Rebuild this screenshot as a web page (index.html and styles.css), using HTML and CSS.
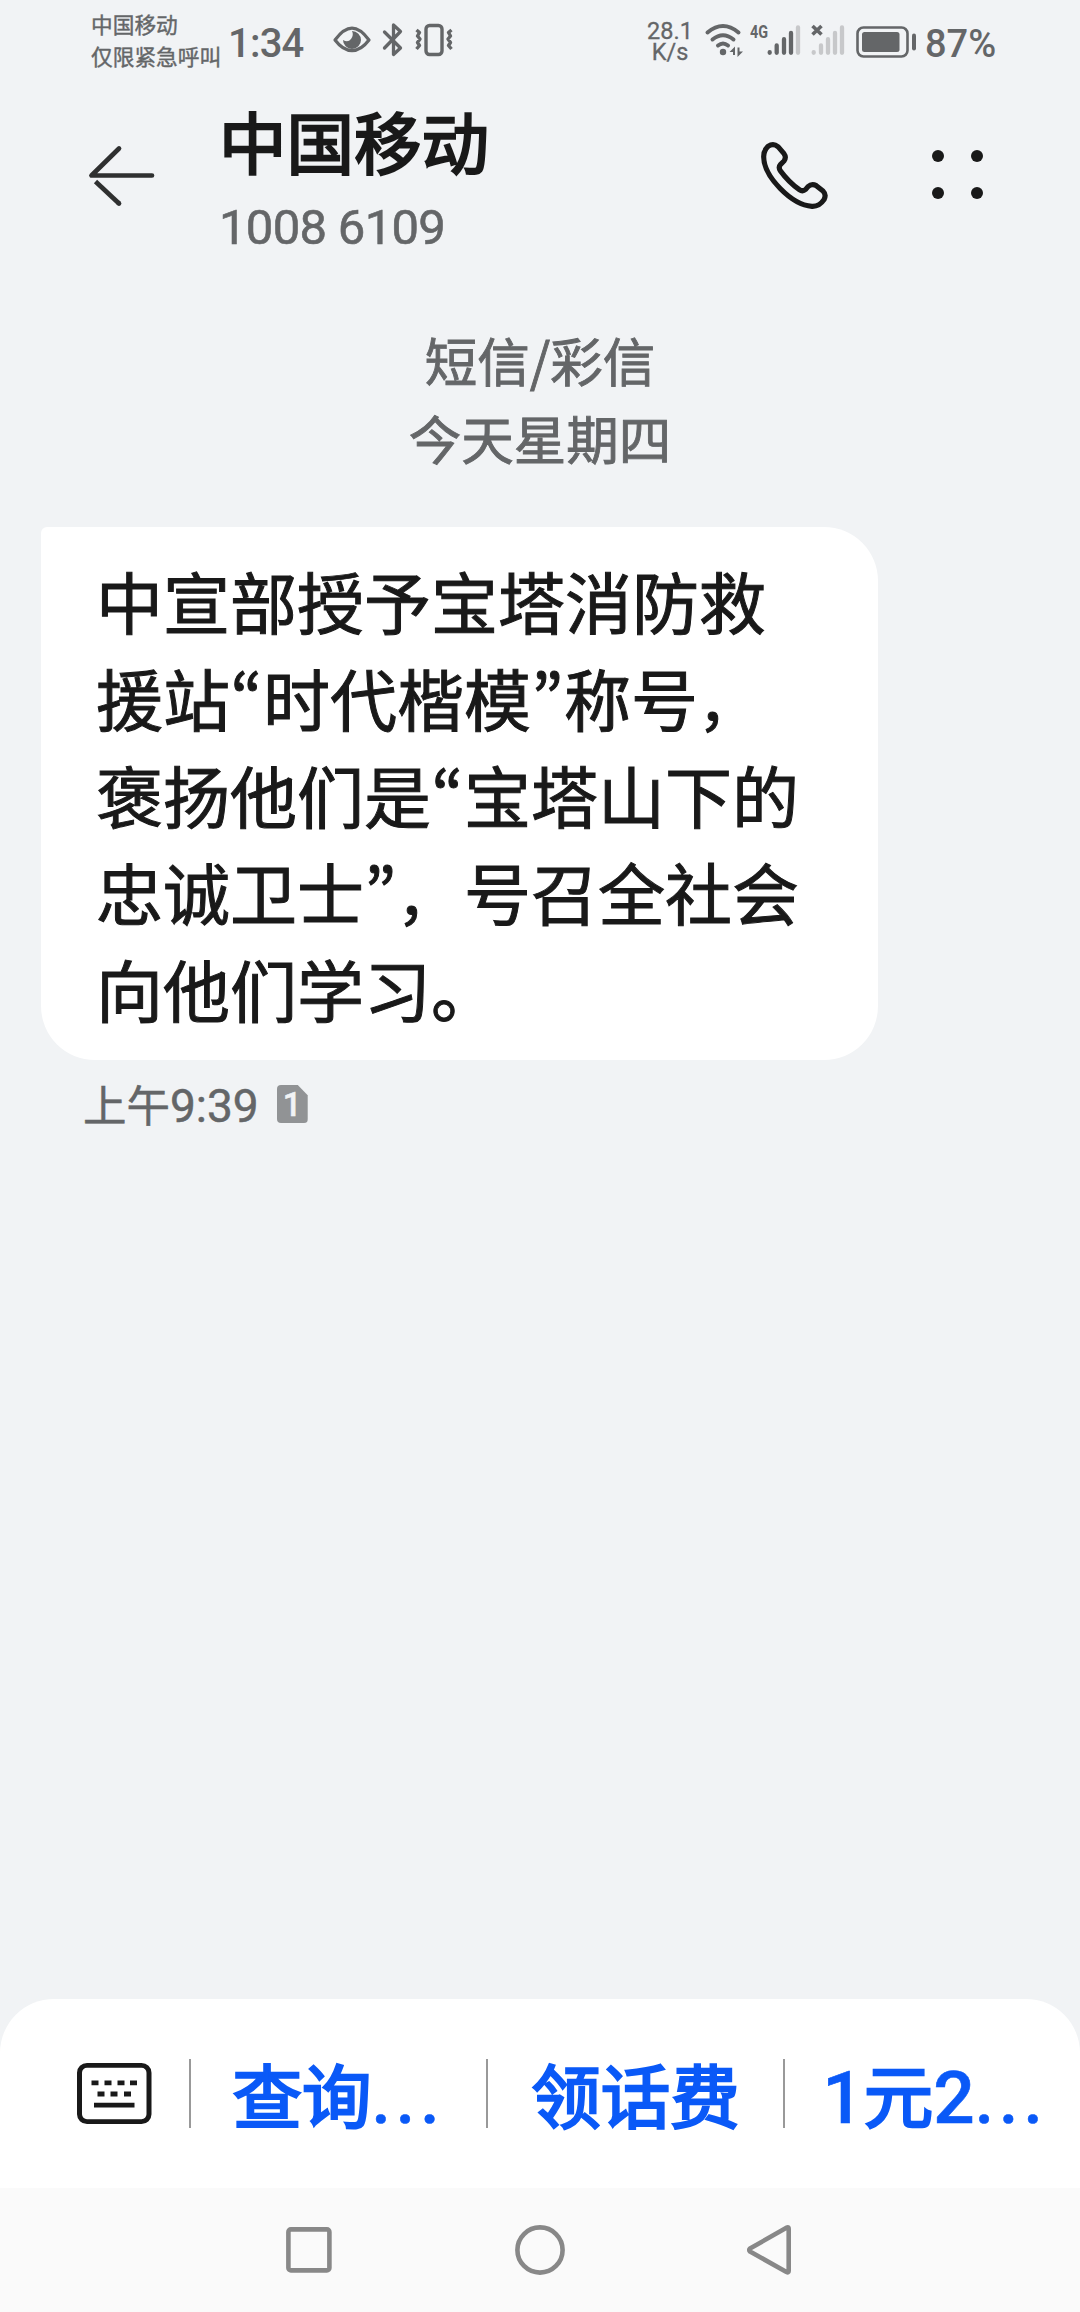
FILE: index.html
```html
<!DOCTYPE html>
<html lang="zh-CN">
<head>
<meta charset="utf-8">
<title>中国移动</title>
<link rel="stylesheet" href="styles.css">
</head>
<body>
<div class="screen">
  <div class="status">
    <div class="carriers"><span>中国移动</span><span>仅限紧急呼叫</span></div>
    <span class="clock">1:34</span>
    <svg class="ic-eye" width="38" height="28" viewBox="0 0 38 28"><path d="M2 14C8 6 13 2.200 19 2.200S30 6 36 14C30 22 25 24.600 19 24.600S8 22 2 14Z" fill="none" stroke="currentColor" stroke-width="3.200" stroke-linejoin="round"/><path d="M19 5a9 9 0 1 1-9 9q5 3 8-1t1-8Z" fill="currentColor"/></svg>
    <svg class="ic-bt" width="22" height="36" viewBox="0 0 22 36"><path d="M2.500 10 18.500 26 11.500 32.500V3L18.500 9.500 2.500 26" fill="none" stroke="currentColor" stroke-width="3.300" stroke-linecap="round" stroke-linejoin="round"/></svg>
    <svg class="ic-vib" width="40" height="34" viewBox="0 0 40 34"><rect x="12" y="2.500" width="16" height="29" rx="3.500" fill="none" stroke="currentColor" stroke-width="3.400"/><path d="M2.500 7 5.500 9.500 3.500 13 6 16 3.500 19.500 5.500 22.500 2.500 26M37.500 7 34.500 9.500 36.500 13 34 16 36.500 19.500 34.500 22.500 37.500 26" fill="none" stroke="currentColor" stroke-width="3.400" stroke-linejoin="round"/></svg>
    <div class="speed"><span>28.1</span><span>K/s</span></div>
    <svg class="ic-wifi" width="40" height="34" viewBox="0 0 40 34"><g fill="none" stroke="currentColor" stroke-width="4" stroke-linecap="round"><path d="M2.500 9.500Q18 -3.500 33.500 9.500"/><path d="M7.500 16.500Q18 8 28.500 16.500"/><path d="M13 22.500Q18 18.500 23 22.500" /></g><circle cx="18" cy="29" r="3.200" fill="currentColor"/><path d="M24.500 29 30 23.500V32H28V29ZM38 28.500 32.500 34V24.500H34.500V28.500Z" fill="currentColor"/></svg>
    <span class="net">4G</span>
    <svg class="ic-sig" width="36" height="32" viewBox="0 0 36 32"><g stroke="currentColor" stroke-width="4.300" stroke-linecap="round"><path d="M3.700 28.200V28.800M10.700 21.500V28.800M18 15.200V28.800M25 9V28.800"/><path class="faded" d="M32 3.500V28.800"/></g></svg>
    <svg class="ic-sig2" width="38" height="32" viewBox="0 0 38 32"><path class="faded" stroke-width="4.300" stroke-linecap="round" d="M4.700 28.200V28.800M12 21.500V28.800M19 15.200V28.800M26 9V28.800M33 3.500V28.800"/><path d="M3.500 2 12.500 10.500M12.500 2 3.500 10.500" stroke="currentColor" stroke-width="3.600"/></svg>
    <svg class="ic-bat" width="62" height="32" viewBox="0 0 62 32"><rect x="1.500" y="1.500" width="50" height="29" rx="6" fill="none" stroke="currentColor" stroke-width="2.600"/><rect x="6" y="6" width="37.500" height="20" rx="2.500" fill="currentColor"/><rect x="56" y="7.500" width="4" height="17" rx="2" fill="currentColor"/></svg>
    <span class="pct">87%</span>
  </div>

  <header class="header">
    <svg class="ic-back" width="70" height="62" viewBox="0 0 70 62"><g fill="none" stroke="#2f3030" stroke-width="4.700" stroke-linecap="round" stroke-linejoin="round"><path d="M32 3.500 4.500 30.500H65"/><path d="M8.500 36.500 32 58.500" stroke-linecap="butt"/><path d="M31.500 58 32 58.500"/></g></svg>
    <div class="who"><h1>中国移动</h1><p>1008 6109</p></div>
    <svg class="ic-phone" width="70" height="70" viewBox="120 93 210 210"><path d="M131 140Q131 122 144 109Q160 98 174 110L192 131Q200 142 192 153L182 163Q174 172 181 182Q205 215 238 239Q248 246 257 238L264 230Q275 220 289 227L309 243Q320 254 312 269Q298 290 276 289C215 285 131 200 131 140Z" fill="none" stroke="#191919" stroke-width="15.500" stroke-linejoin="round"/></svg>
    <svg class="ic-more" width="52" height="50" viewBox="0 0 52 50"><g fill="#191919"><circle cx="6" cy="6" r="6"/><circle cx="45" cy="6" r="6"/><circle cx="6" cy="43" r="6"/><circle cx="45" cy="43" r="6"/></g></svg>
  </header>

  <main class="thread">
    <div class="day"><div>短信/彩信</div><div>今天星期四</div></div>
    <div class="bubble">中宣部授予宝塔消防救<br>援站<span class="q">“</span>时代楷模<span class="q">”</span>称号<span class="comma">，</span><br>褒扬他们是<span class="q">“</span>宝塔山下的<br>忠诚卫士<span class="q">”</span><span class="comma">，</span>号召全社会<br>向他们学习。</div>
    <div class="meta"><span>上午<span class="num">9:39</span></span>
      <span class="sim">1</span>
    </div>
  </main>

  <footer class="menu">
    <div class="kb"><svg width="75" height="61" viewBox="0 0 75 63" preserveAspectRatio="none"><rect x="2.500" y="2.500" width="69.500" height="58" rx="7.500" fill="none" stroke="#191919" stroke-width="5"/><path d="M14.500 20.500h7M27.500 20.500h7M40.500 20.500h7M53 20.500h7M20.500 32h7M33.500 32h7M47 32h7" stroke="#191919" stroke-width="5"/><path d="M17 43.500h40.500" stroke="#191919" stroke-width="5"/></svg></div>
    <div class="item">查询<span class="dots">...</span></div>
    <div class="item">领话费</div>
    <div class="item"><span class="num">1</span>元<span class="num">2</span><span class="dots">...</span></div>
  </footer>
  <nav class="nav">
    <svg width="46" height="52" viewBox="0 0 46 52"><rect x="2.400" y="5.400" width="41" height="41" rx="2.500"/></svg>
    <svg width="52" height="52" viewBox="0 0 52 52"><circle cx="26" cy="26" r="22.600"/></svg>
    <svg width="46" height="52" viewBox="0 0 46 52"><path d="M39.500 3.400Q40.700 3.400 40.700 5V47Q40.700 49 38.500 48L2 27.500Q.4 26 2 24.500L38 4Z"/></svg>
  </nav>
</div>
</body>
</html>
```
FILE: styles.css
```css
* { box-sizing: border-box; margin: 0; padding: 0; }
body { background: #f1f3f5; font-family: "Noto Sans CJK SC", sans-serif; }
.screen { width: 1080px; height: 2312px; display: flex; flex-direction: column; overflow: hidden; }
svg { display: block; flex: none; overflow: visible; }

.status { height: 90px; display: flex; align-items: flex-start; color: #646668; padding-left: 91px; white-space: nowrap; }
.carriers { width: 137px; padding-top: 8px; font-size: 21.700px; line-height: 32px; display: flex; flex-direction: column; -webkit-text-stroke: .4px; }
.clock { width: 105px; margin-top: 20px; font: 500 40px/48px Roboto, sans-serif; letter-spacing: -.8px; }
.ic-eye { margin-top: 26px; }
.ic-bt { margin: 22px 0 0 11px; }
.ic-vib { margin: 23px 0 0 10px; }
.speed { width: 50px; margin: 21px 0 0 191px; font: 400 23.500px/21px Roboto, sans-serif; display: flex; flex-direction: column; align-items: center; -webkit-text-stroke: .3px; }
.ic-wifi { margin: 23px 0 0 10px; }
.net { width: 16px; margin: 22px 0 0 5px; font: 700 18px/20px Roboto, sans-serif; transform: scaleX(.8); transform-origin: left; }
.ic-sig { margin-top: 24px; }
.ic-sig2 { margin: 24px 0 0 7px; }
.ic-bat { margin: 26px 0 0 9px; }
.faded { stroke: #c7c8ca; }
.pct { margin: 21px 0 0 7px; font: 500 38px/46px Roboto, sans-serif; }

.header { height: 200px; display: flex; align-items: flex-start; padding-left: 87px; }
.ic-back { margin-top: 55px; }
.who { width: 540px; padding-left: 62px; }
.who h1 { font-size: 67.500px; line-height: 80px; font-weight: 400; -webkit-text-stroke: 2.300px; color: #191919; margin-top: 10px; }
.who p { font: 400 49px/58px Roboto, sans-serif; letter-spacing: -.7px; -webkit-text-stroke: .6px; color: #646668; margin-top: 19px; }
.ic-phone { margin: 51px 0 0 63px; }
.ic-more { margin: 60px 0 0 102px; }

.thread { flex: 1; padding: 30px 0 0 41px; }
.day { margin-left: -41px; text-align: center; font-size: 52.500px; line-height: 78px; color: #646668; -webkit-text-stroke: .9px; }
.bubble { width: 837px; height: 533px; margin-top: 51px; padding: 24px 0 0 55px; border-radius: 6px 54px 54px 54px; background: #fff; color: #191919; font-size: 67px; line-height: 97px; white-space: nowrap; -webkit-text-stroke: 1px; }
.q { display: inline-block; width: 33px; text-align: center; font-variant-east-asian: proportional-width; line-height: 1; transform: translateY(4px); }
.comma { display: inline-block; width: 67px; font-size: 60px; line-height: 1; }
.meta { display: flex; align-items: center; gap: 18px; height: 60px; margin-top: 15px; padding-left: 42px; font-size: 43.500px; line-height: 60px; color: #646668; -webkit-text-stroke: .5px; }
.meta .num { font: 400 46px/60px Roboto, sans-serif; }
.sim { width: 31px; height: 38px; margin-bottom: 2px; background: #919395; color: #f1f3f5; border-radius: 4px; clip-path: polygon(0 0, 68% 0, 100% 27%, 100% 100%, 0 100%); font: 500 33px/39px Roboto, sans-serif; text-align: center; }

.menu { height: 189px; background: #fff; border-radius: 54px 54px 0 0; display: flex; align-items: center; }
.kb { width: 189px; padding-left: 77px; }
.item { width: 297px; flex: none; height: 69px; border-left: 2px solid #999; color: #0a59f7; font-size: 69.500px; font-weight: 400; -webkit-text-stroke: 2.500px; line-height: 68px; text-align: center; white-space: nowrap; }
.item:last-child { padding-left: 5px; }
.item .num { font: 500 73px/60px Roboto, sans-serif; -webkit-text-stroke: .6px; }
.dots { letter-spacing: 5px; font-weight: 500; font-family: Roboto, sans-serif; -webkit-text-stroke: .5px; }
.nav { height: 124px; background: #fafafa; display: flex; justify-content: center; align-items: center; gap: 182px; }
.nav svg { fill: none; stroke: #888; stroke-width: 4.600px; stroke-linejoin: round; }
```
